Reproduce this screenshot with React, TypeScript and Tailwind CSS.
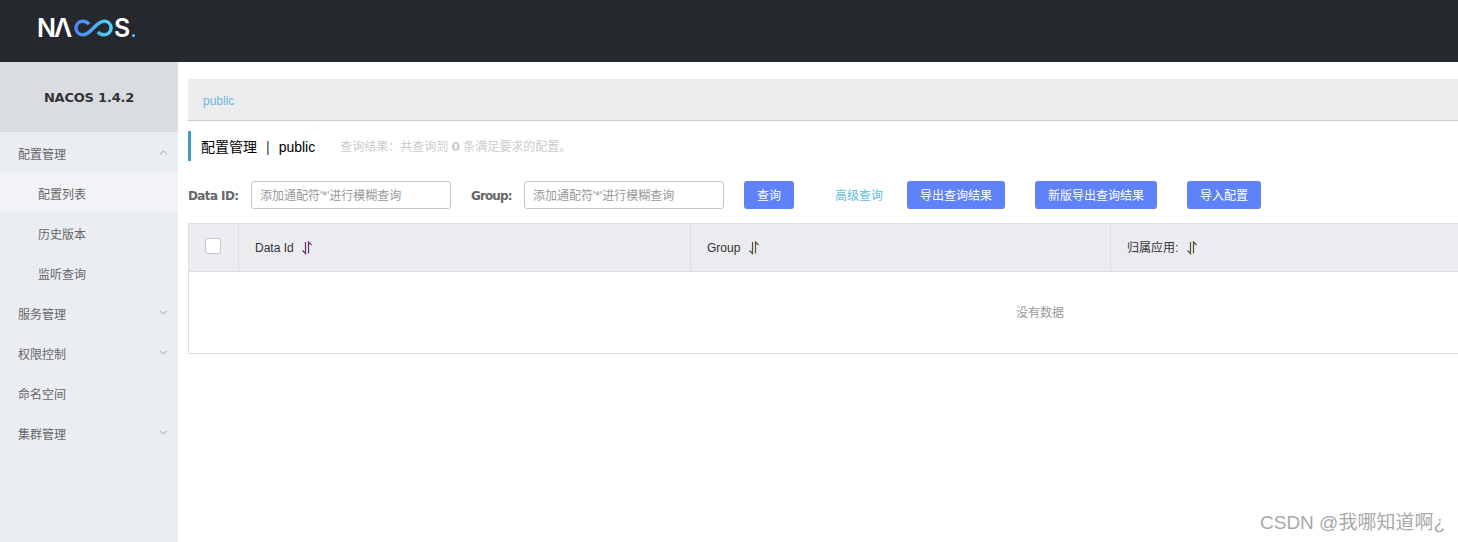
import { ChevronDown, ChevronUp } from "lucide-react";

const font = "font-['Liberation_Sans','Noto_Sans_CJK_SC',sans-serif]";
const boldFont = "font-['DejaVu_Sans','Noto_Sans_CJK_SC',sans-serif]";

function SortIcon({ color }: { color: string }) {
  return (
    <svg width="12" height="14" viewBox="0 0 12 14" fill="none" stroke={color} strokeWidth="1.2">
      <path d="M4.5 1V12.5L1.5 9.5" />
      <path d="M7.5 12.5V1L10.5 4" />
    </svg>
  );
}

function Logo() {
  return (
    <div className="flex items-center text-white h-[18px] w-[98px] font-['Inter',sans-serif] text-[25px] leading-[18px] font-semibold" aria-label="NACOS.">
      <span className="w-[17px]">N</span>
      <span className="w-[20px]">Λ</span>
      <svg width="39" height="18" viewBox="0 0 40 18" fill="none" strokeWidth="3.6" className="shrink-0">
        <defs>
          <linearGradient id="nacos-loop" x1="0" y1="0" x2="1" y2="0">
            <stop offset="0" stopColor="#4d84f5" />
            <stop offset="1" stopColor="#52d0f5" />
          </linearGradient>
        </defs>
        <path
          d="M15.5 5C13.5 3 11.5 2 9 2C5 2 2 5 2 9C2 13 5 16 9 16C14 16 17 12 20 9C23 6 26 2 31 2C35 2 38 5 38 9C38 13 35 16 31 16C28.5 16 26.5 15 24.5 13"
          stroke="url(#nacos-loop)"
        />
      </svg>
      <span className="w-[18px] ml-[1px]">S</span>
      <span className="mt-[14px] w-[3px] h-[3px] shrink-0 rounded-full bg-[#52d0f5]" />
    </div>
  );
}

function NavGroup({ label, open, chevron = true }: { label: string; open?: boolean; chevron?: boolean }) {
  return (
    <div className="h-10 pl-[18px] pr-2 pt-[5px] flex items-center justify-between text-xs text-[#666]">
      <span>{label}</span>
      {chevron &&
        (open ? (
          <ChevronUp size={13} strokeWidth={1.5} className="text-[#8c8c8c] -mt-1" />
        ) : (
          <ChevronDown size={13} strokeWidth={1.5} className="text-[#8c8c8c] -mt-1" />
        ))}
    </div>
  );
}

function NavItem({ label, active }: { label: string; active?: boolean }) {
  return <div className={`h-10 pl-[38px] pt-[5px] flex items-center text-xs text-[#666] ${active ? "bg-[#f2f3f7]" : ""}`}>{label}</div>;
}

function SearchInput() {
  return (
    <div className="w-[200px] h-7 border border-[#c4c6cf] rounded-[3px] pl-2 pt-[2px] flex items-center text-xs text-[#999] bg-white">
      添加通配符'*'进行模糊查询
    </div>
  );
}

function Btn({ label, width }: { label: string; width: string }) {
  return <button className={`h-7 pt-[2px] rounded-[3px] bg-[#5f82fb] text-white text-xs flex items-center justify-center ${width}`}>{label}</button>;
}

function HeaderCell({ label, width, color, gap }: { label: string; width: string; color: string; gap: string }) {
  return (
    <div className={`h-full border-r border-[#dcdee3] pl-4 flex items-center text-xs text-[#333] ${gap} ${width}`}>
      <span>{label}</span>
      <SortIcon color={color} />
    </div>
  );
}

export default function App() {
  return (
    <div className={`relative w-[1458px] h-[542px] overflow-hidden bg-white flex flex-col ${font}`}>
      <header className="h-[62px] shrink-0 bg-[#25282d] pl-[37px] pt-[19px]">
        <Logo />
      </header>

      <div className="flex flex-1 min-h-0">
        <aside className="w-[178px] shrink-0 bg-[#eaedf1]">
          <div className={`h-[70px] pt-[1px] bg-[#d9dde2] flex items-center justify-center text-[13px] tracking-[-0.2px] font-bold text-[#333] ${boldFont}`}>NACOS 1.4.2</div>
          <NavGroup label="配置管理" open />
          <NavItem label="配置列表" active />
          <NavItem label="历史版本" />
          <NavItem label="监听查询" />
          <NavGroup label="服务管理" />
          <NavGroup label="权限控制" />
          <NavGroup label="命名空间" chevron={false} />
          <NavGroup label="集群管理" />
        </aside>

        <main className="flex-1 min-w-0 pl-[10px] pt-[17px]">
          <div className="h-[42px] w-[1300px] pt-[3px] bg-[#ececec] border-b border-[#ccc] pl-[15px] flex items-center text-xs text-[#6eb8dc]">public</div>

          <div className="mt-[10px] h-[30px] pt-[1px] border-l-[3px] border-[#3d9ccb] pl-[10px] flex items-center text-sm text-black">
            <span>配置管理</span>
            <span className="mx-[9px] text-[#333]">|</span>
            <span>public</span>
            <span className="ml-[25px] text-xs text-[#ccc]">
              查询结果：共查询到 <b className={boldFont}>0</b> 条满足要求的配置。
            </span>
          </div>

          <div className="mt-5 flex items-center">
            <span className={`w-[63px] pt-[1px] text-xs tracking-[-0.6px] font-bold text-[#666] ${boldFont}`}>Data ID:</span>
            <SearchInput />
            <span className={`ml-5 w-[53px] pt-[1px] text-xs tracking-[-0.9px] font-bold text-[#666] ${boldFont}`}>Group:</span>
            <SearchInput />
            <div className="ml-5"><Btn label="查询" width="w-[50px]" /></div>
            <span className="ml-[41px] pt-[2px] w-[48px] text-xs text-[#5bc0de]">高级查询</span>
            <div className="ml-6"><Btn label="导出查询结果" width="w-[98px]" /></div>
            <div className="ml-[30px]"><Btn label="新版导出查询结果" width="w-[122px]" /></div>
            <div className="ml-[30px]"><Btn label="导入配置" width="w-[74px]" /></div>
          </div>

          <div className="mt-[14px] w-[1704px] h-[131px] border border-[#dcdee3]">
            <div className="h-[48px] bg-[#ebecf0] border-b border-[#dcdee3] flex items-center">
              <div className="w-[50px] h-full border-r border-[#dcdee3] pr-[2px] pb-[4px] flex items-center justify-center">
                <div className="w-4 h-4 bg-white border border-[#c4c6cf] rounded-[3px]" />
              </div>
              <HeaderCell label="Data Id" width="w-[452px]" color="#6a2a70" gap="gap-[7px]" />
              <HeaderCell label="Group" width="w-[420px]" color="#5a5030" gap="gap-2" />
              <HeaderCell label="归属应用:" width="w-[420px]" color="#4a5030" gap="gap-2" />
            </div>
            <div className="h-[81px] flex items-center justify-center text-xs text-[#999]">没有数据</div>
          </div>
        </main>
      </div>

      <div className="absolute right-[13px] bottom-[7px] text-[19px] leading-6 text-[#a8a8a8]">CSDN @我哪知道啊¿</div>
    </div>
  );
}
